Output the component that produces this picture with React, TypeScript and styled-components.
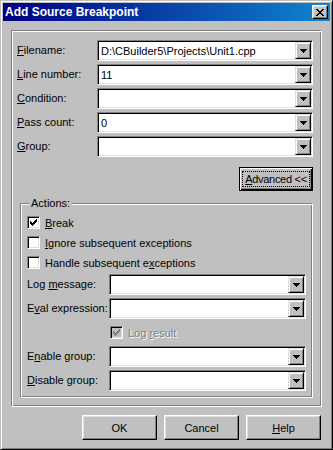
import { Fragment } from "react";
import type { ReactNode } from "react";
import styled, { createGlobalStyle } from "styled-components";

const GlobalStyle = createGlobalStyle`
  html, body {
    margin: 0;
    padding: 0;
    background: #c0c0c0;
  }
  * {
    box-sizing: border-box;
  }
`

interface FieldRow {
  label: ReactNode;
  value: string;
}

const topFields: FieldRow[] = [
  { label: <><u>F</u>ilename:</>, value: "D:\\CBuilder5\\Projects\\Unit1.cpp" },
  { label: <><u>L</u>ine number:</>, value: "11" },
  { label: <><u>C</u>ondition:</>, value: "" },
  { label: <><u>P</u>ass count:</>, value: "0" },
  { label: <><u>G</u>roup:</>, value: "" },
]

function Arrow() {
  return (
    <svg width="7" height="4" viewBox="0 0 7 4" shapeRendering="crispEdges">
      <rect x="0" y="0" width="7" height="1" fill="#000" />
      <rect x="1" y="1" width="5" height="1" fill="#000" />
      <rect x="2" y="2" width="3" height="1" fill="#000" />
      <rect x="3" y="3" width="1" height="1" fill="#000" />
    </svg>
  )
}

// classic 7x7 check mark, one run of pixels per entry: [x, y, width]
const checkPixels = [
  [6, 0, 1], [5, 1, 2], [0, 2, 1], [4, 2, 3], [0, 3, 2], [3, 3, 3],
  [0, 4, 5], [1, 5, 3], [2, 6, 1],
]

function Tick({ color }: { color: string }) {
  return (
    <svg width="7" height="7" viewBox="0 0 7 7" shapeRendering="crispEdges">
      {checkPixels.map(([x, y, w], i) => (
        <rect key={i} x={x} y={y} width={w} height="1" fill={color} />
      ))}
    </svg>
  )
}

function CloseGlyph() {
  return (
    <svg width="8" height="7" viewBox="0 0 8 7" shapeRendering="crispEdges">
      <path d="M0 0h2v1h1v1h2V1h1V0h2v1H7v1H6v1H5v1h1v1h1v1h1v1H6V6H5V5H3v1H2v1H0V6h1V5h1V4h1V3H2V2H1V1H0z" fill="#000" />
    </svg>
  )
}

function Combo({ value }: { value: string }) {
  return (
    <ComboBox>
      <ComboText>{value}</ComboText>
      <DropButton>
        <Arrow />
      </DropButton>
    </ComboBox>
  )
}

function Check({ checked, disabled, children }: { checked?: boolean; disabled?: boolean; children: ReactNode }) {
  return (
    <CheckRow>
      <CheckBox $disabled={disabled}>
        {checked && <Tick color={disabled ? "#808080" : "#000"} />}
      </CheckBox>
      <CheckText $disabled={disabled}>{children}</CheckText>
    </CheckRow>
  )
}

function App() {
  return (
    <>
      <GlobalStyle />
      <Window>
        <TitleBar>
          <Title>Add Source Breakpoint</Title>
          <CloseButton>
            <CloseGlyph />
          </CloseButton>
        </TitleBar>
        <Body>
          <Panel>
            <FieldGrid $labelWidth={80}>
              {topFields.map((f, i) => (
                <Fragment key={i}>
                  <Label>{f.label}</Label>
                  <Combo value={f.value} />
                </Fragment>
              ))}
            </FieldGrid>

            <AdvancedRow>
              <DefaultButton>
                <FocusRect><u>A</u>dvanced &lt;&lt;</FocusRect>
              </DefaultButton>
            </AdvancedRow>

            <GroupBox>
              <Legend>Actions:</Legend>
              <CheckList>
                <Check checked><u>B</u>reak</Check>
                <Check><u>I</u>gnore subsequent exceptions</Check>
                <Check>Handle subsequent e<u>x</u>ceptions</Check>
              </CheckList>
              <FieldGrid $labelWidth={82}>
                <Label>Log <u>m</u>essage:</Label>
                <Combo value="" />
                <Label>E<u>v</u>al expression:</Label>
                <Combo value="" />
                <span />
                <LogResultRow>
                  <Check checked disabled>Log <u>r</u>esult</Check>
                </LogResultRow>
                <Label>E<u>n</u>able group:</Label>
                <Combo value="" />
                <Label><u>D</u>isable group:</Label>
                <Combo value="" />
              </FieldGrid>
            </GroupBox>
          </Panel>

          <ButtonRow>
            <Button>OK</Button>
            <Button>Cancel</Button>
            <Button><u>H</u>elp</Button>
          </ButtonRow>
        </Body>
      </Window>
    </>
  )
}

const Window = styled.div`
  width: 333px;
  height: 450px;
  display: flex;
  flex-direction: column;
  padding: 2px;
  background-color: #c0c0c0;
  border: 1px solid;
  border-color: #c0c0c0 #000000 #000000 #c0c0c0;
  box-shadow: inset 1px 1px #ffffff, inset -1px -1px #808080;
  font-family: 'Liberation Sans', Arial, sans-serif;
  font-size: 11px;
  color: #000000;
`

const TitleBar = styled.div`
  height: 18px;
  margin-bottom: 1px;
  display: flex;
  align-items: center;
  justify-content: space-between;
  padding: 0 2px 0 2px;
  background: linear-gradient(to right, #000080, #1084d0);
`

const Title = styled.span`
  color: #ffffff;
  font-weight: 700;
  font-size: 12px;
  white-space: nowrap;
`

const CloseButton = styled.div`
  width: 16px;
  height: 14px;
  display: flex;
  align-items: center;
  justify-content: center;
  background-color: #c0c0c0;
  border: 1px solid;
  border-color: #ffffff #000000 #000000 #ffffff;
  box-shadow: inset -1px -1px #808080, inset 1px 1px #dfdfdf;
`

const Body = styled.div`
  flex: 1;
  display: flex;
  flex-direction: column;
  padding: 8px 8px 7px 8px;
`

const Panel = styled.div`
  display: flex;
  flex-direction: column;
  padding: 9px 8px 8px 5px;
  border: 1px solid;
  border-color: #808080 #ffffff #ffffff #808080;
  box-shadow: inset 1px 1px #ffffff, inset -1px -1px #808080;
`

const FieldGrid = styled.div<{ $labelWidth: number }>`
  display: grid;
  grid-template-columns: ${(p) => p.$labelWidth}px 1fr;
  row-gap: 3px;
  align-items: center;
`

const Label = styled.span`
  white-space: nowrap;
  line-height: 13px;
`

const ComboBox = styled.div`
  height: 21px;
  display: flex;
  align-items: stretch;
  background-color: #ffffff;
  border: 1px solid;
  border-color: #808080 #ffffff #ffffff #808080;
  box-shadow: inset 1px 1px #000000, inset -1px -1px #dfdfdf;
  padding: 1px;
`

const ComboText = styled.span`
  flex: 1;
  display: flex;
  align-items: center;
  padding-left: 2px;
  white-space: nowrap;
  overflow: hidden;
`

const DropButton = styled.div`
  width: 16px;
  display: flex;
  align-items: center;
  justify-content: center;
  background-color: #c0c0c0;
  border: 1px solid;
  border-color: #dfdfdf #000000 #000000 #dfdfdf;
  box-shadow: inset 1px 1px #ffffff, inset -1px -1px #808080;
`

const AdvancedRow = styled.div`
  display: flex;
  justify-content: flex-end;
  margin-top: 10px;
`

const DefaultButton = styled.div`
  width: 74px;
  height: 24px;
  display: flex;
  align-items: center;
  justify-content: center;
  background-color: #c0c0c0;
  border: 1px solid #000000;
  box-shadow: inset 1px 1px #ffffff, inset -1px -1px #000000, inset -2px -2px #808080;
`

const FocusRect = styled.span`
  width: 68px;
  height: 16px;
  display: flex;
  align-items: center;
  justify-content: center;
  border: 1px dotted #000000;
  white-space: nowrap;
  letter-spacing: -0.3px;
`

const GroupBox = styled.div`
  position: relative;
  margin: 12px 0 0 3px;
  padding: 12px 6px 6px 6px;
  border: 1px solid;
  border-color: #808080 #ffffff #ffffff #808080;
  box-shadow: inset 1px 1px #ffffff, inset -1px -1px #808080;
`

const Legend = styled.span`
  position: absolute;
  top: -7px;
  left: 8px;
  padding: 0 2px;
  line-height: 13px;
  background-color: #c0c0c0;
`

const CheckList = styled.div`
  display: flex;
  flex-direction: column;
  gap: 7px;
  margin-bottom: 5px;
`

const CheckRow = styled.div`
  display: flex;
  align-items: center;
  height: 13px;
  gap: 5px;
`

const CheckBox = styled.span<{ $disabled?: boolean }>`
  width: 13px;
  height: 13px;
  flex-shrink: 0;
  display: flex;
  align-items: center;
  justify-content: center;
  background-color: ${(p) => (p.$disabled ? "#c0c0c0" : "#ffffff")};
  border: 1px solid;
  border-color: #808080 #ffffff #ffffff #808080;
  box-shadow: inset 1px 1px #000000, inset -1px -1px #dfdfdf;
`

const CheckText = styled.span<{ $disabled?: boolean }>`
  white-space: nowrap;
  color: ${(p) => (p.$disabled ? "#808080" : "#000000")};
  text-shadow: ${(p) => (p.$disabled ? "1px 1px 0 #ffffff" : "none")};
`

const LogResultRow = styled.div`
  margin: 4px 0 4px 1px;
`

const ButtonRow = styled.div`
  display: flex;
  justify-content: flex-end;
  gap: 7px;
  margin: 8px 1px 0 0;
`

const Button = styled.div`
  width: 75px;
  height: 25px;
  display: flex;
  align-items: center;
  justify-content: center;
  background-color: #c0c0c0;
  border: 1px solid;
  border-color: #ffffff #000000 #000000 #ffffff;
  box-shadow: inset -1px -1px #808080, inset 1px 1px #dfdfdf;
`

export default App;
